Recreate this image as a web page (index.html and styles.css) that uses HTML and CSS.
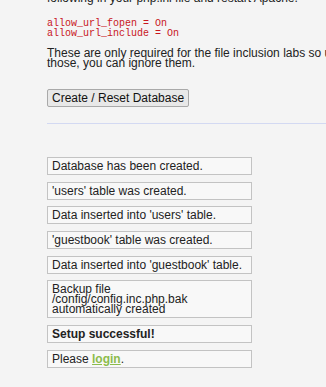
FILE: index.html
```html
<!DOCTYPE html>
<html lang="en">
<head>
    <meta charset="UTF-8">
    <meta name="viewport" content="width=device-width, initial-scale=1.0">
    <title>Setup :: Damn Vulnerable Web Application</title>
    <link rel="stylesheet" href="styles.css">
</head>
<body>
    <div class="body-padded">
        <p class="intro">If you see disabled on either <i>allow_url_fopen</i> or <i>allow_url_include</i>, set the following in your php.ini file and restart Apache.</p>
        <pre class="config">allow_url_fopen = On
allow_url_include = On</pre>
        <p class="note">These are only required for the file inclusion labs so unless you want to play with those, you can ignore them.</p>

        <form class="setup-form" action="#" method="post">
            <button type="submit" name="create_db">Create / Reset Database</button>
        </form>

        <hr class="divider">

        <div class="messages">
            <div class="message">Database has been created.</div>
            <div class="message">'users' table was created.</div>
            <div class="message">Data inserted into 'users' table.</div>
            <div class="message">'guestbook' table was created.</div>
            <div class="message">Data inserted into 'guestbook' table.</div>
            <div class="message">Backup file /config/config.inc.php.bak automatically created</div>
            <div class="message"><em class="success">Setup successful!</em></div>
            <div class="message">Please <a href="#">login</a>.</div>
        </div>
    </div>
</body>
</html>
```

FILE: styles.css
```css
* {
    box-sizing: border-box;
}

html, body {
    overflow: hidden;
}

body {
    margin: 0;
    padding: 0;
    background-color: #f4f4f4;
    color: #222;
    font-family: "Liberation Sans", Arial, sans-serif;
    font-size: 12px;
    line-height: 10px;
}

/* page is scrolled a little, first line sits above the window */
.body-padded {
    width: 480px;
    margin-top: -17px;
    padding-left: 47px;
}

.intro, .note {
    width: 433px;
    margin: 0;
}

.config {
    margin: 16px 0 9px 0;
    font-family: "Liberation Mono", "Courier New", monospace;
    font-size: 10px;
    line-height: 10px;
    color: #c8161d;
}

.setup-form {
    margin: 21px 0 0 0;
}

.setup-form button {
    height: 18px;
    padding: 0 4px;
    font-family: "Liberation Sans", Arial, sans-serif;
    font-size: 12px;
    line-height: 16px;
    color: #111;
    background-color: #e8e8e8;
    border: 1px solid #a9a9a9;
    border-radius: 2px;
}

.divider {
    height: 1px;
    margin: 16px 0 33px 0;
    border: none;
    background-color: #d3d9f2;
}

.message {
    width: 205px;
    margin-bottom: 6.67px;
    padding: 3px 4px;
    background-color: #f8f8f8;
    border: 1px solid #c3c3c3;
}

.success {
    font-style: normal;
    font-weight: bold;
}

.message a {
    color: #8cbc4c;
    font-weight: bold;
    text-decoration: underline;
}
```
